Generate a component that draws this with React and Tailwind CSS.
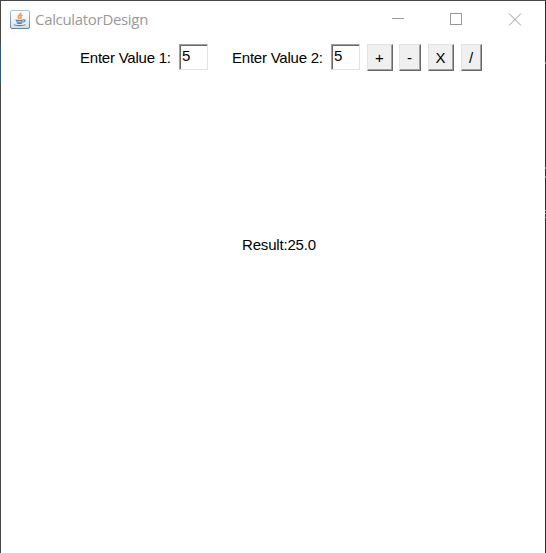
import React from "react";

const font = "font-['Liberation_Sans',Arial,sans-serif]";

function JavaIcon() {
  return (
    <svg width="20" height="19" viewBox="0 0 20 19" className="block shrink-0">
      <defs>
        <linearGradient id="tile" x1="0" y1="0" x2="0" y2="1">
          <stop offset="0" stopColor="#ffffff" />
          <stop offset="0.5" stopColor="#f1f4f7" />
          <stop offset="1" stopColor="#d3dce4" />
        </linearGradient>
        <linearGradient id="edge" x1="0" y1="0" x2="0" y2="1">
          <stop offset="0" stopColor="#b3bfc9" />
          <stop offset="1" stopColor="#67839a" />
        </linearGradient>
      </defs>
      <rect x="0.5" y="0.5" width="19" height="18" rx="1.5" fill="url(#tile)" stroke="url(#edge)" />
      <path d="M10.6 2.8c.6 2-3 2.5-2.4 4.4.2.7.9 1.1 1.2 1.9M12.4 5c-2 .9-2.3 1.7-1.5 2.5.4.5.2 1-.3 1.5" fill="none" stroke="#ea9a5c" strokeWidth="1.6" />
      <path d="M5.6 9.9c1.5.7 5.8.7 7.8 0M6.3 11.5c1.5.7 4.8.7 6.1 0M6.9 13c1.2.5 4 .5 5.2 0M13.2 9.8c2.9-.4 2.5 2-.5 2.5M4 14.6c1.8 1.4 9.4 1.3 11.4 0" fill="none" stroke="#5c83a5" strokeWidth="1.1" />
    </svg>
  );
}

function Field({ value }) {
  return (
    <div className="h-[26px] w-[29px] shrink-0 border border-t-[#a0a0a0] border-r-[#e3e3e3] border-b-[#e3e3e3] border-l-[#a0a0a0]">
      <div className="h-full border-t border-l border-[#696969] pl-px text-[15px] leading-[20px]">{value}</div>
    </div>
  );
}

function Key({ children, className }) {
  return (
    <button className={`h-[27px] shrink-0 border border-t-[#e3e3e3] border-r-[#696969] border-b-[#696969] border-l-[#e3e3e3] bg-[#f0f0f0] ${className}`}>
      <span className="flex h-full items-center justify-center border-r border-b border-[#a0a0a0] text-[15px] leading-none">{children}</span>
    </button>
  );
}

export default function App() {
  return (
    <div className={`flex h-[553px] w-[546px] border-t border-[#474747] bg-white text-black ${font}`}>
      <div className="flex w-px shrink-0 flex-col bg-[#474747]">
        <div className="mt-[44px] h-[39px] bg-[#2c5a78]" />
      </div>
      <div className="flex w-[544px] shrink-0 flex-col">
        <header className="flex h-[36px] shrink-0 items-center pl-[9px]">
          <JavaIcon />
          <span className="mb-px ml-[5px] w-[150px] font-['Open_Sans','Noto_Sans',sans-serif] text-[15px] leading-5 tracking-[-0.32px] text-[#999999]">CalculatorDesign</span>
          <svg width="130" height="14" viewBox="0 0 130 14" fill="none" stroke="#999999" className="mt-px ml-[207px] shrink-0">
            <path d="M0 5.5h12" />
            <rect x="58.5" y="0.5" width="11" height="11" />
            <path d="M117 0.5l12 12M129 0.5l-12 12" />
          </svg>
        </header>
        <div className="flex h-[34px] shrink-0 items-start pt-[7px] pl-[79px]">
          <span className="mt-[5px] w-[99px] text-[15px] leading-[18px] tracking-[-0.23px] whitespace-nowrap">Enter Value 1:</span>
          <Field value="5" />
          <span className="mt-[5px] ml-[24px] w-[99px] text-[15px] leading-[18px] tracking-[-0.23px] whitespace-nowrap">Enter Value 2:</span>
          <Field value="5" />
          <Key className="ml-[7px] w-[26px]">+</Key>
          <Key className="ml-[6px] w-[22px]">-</Key>
          <Key className="ml-[7px] w-[26px]">X</Key>
          <Key className="ml-[7px] w-[21px]">/</Key>
        </div>
        <main className="flex grow items-start pt-[165px] pl-[241px]">
          <span className="text-[15px] leading-[18px] tracking-[-0.18px] whitespace-nowrap">Result:25.0</span>
        </main>
      </div>
      <div className="flex w-px shrink-0 flex-col bg-[#282a2d]">
        <div className="mt-[61px] h-[2px] bg-[#8b9299]" />
        <div className="mt-[103px] h-[2px] bg-[#85878a]" />
        <div className="mt-[7px] h-[2px] bg-[#85878a]" />
        <div className="mt-[32px] h-px bg-[#a0a0a0]" />
        <div className="mt-[2px] h-px bg-[#a0a0a0]" />
        <div className="mt-[3px] h-px bg-[#a0a0a0]" />
      </div>
    </div>
  );
}
